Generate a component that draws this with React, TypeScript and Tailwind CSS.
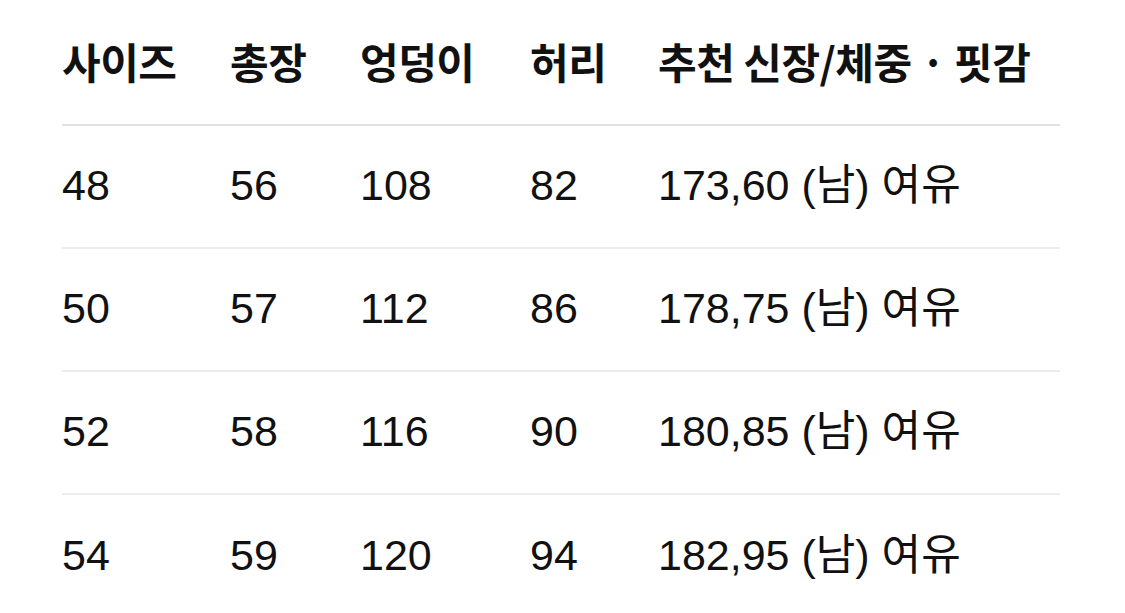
const headers = ["사이즈", "총장", "엉덩이", "허리", "추천 신장/체중 · 핏감"];

const rows = [
  ["48", "56", "108", "82", "173,60 (남) 여유"],
  ["50", "57", "112", "86", "178,75 (남) 여유"],
  ["52", "58", "116", "90", "180,85 (남) 여유"],
  ["54", "59", "120", "94", "182,95 (남) 여유"],
];

const cols = "grid grid-cols-[168px_130px_170px_128px_1fr] items-center";

export default function App() {
  return (
    <div className="w-[1125px] h-[613px] overflow-hidden bg-white text-[#111] font-['Liberation_Sans','Noto_Sans_CJK_KR',sans-serif]">
      <div className="ml-[62px] w-[998px]">
        <div className={`${cols} h-[126px] border-b-2 border-[#e2e2e2] pb-[4px] text-[42px] font-bold font-['Noto_Sans_CJK_KR',sans-serif] tracking-[-0.5px]`}>
          {headers.map((h) => (
            <div key={h}>{h}</div>
          ))}
        </div>
        {rows.map((r, i) => (
          <div
            key={r[0]}
            className={`${cols} h-[123px] text-[43px] pb-[2px] ${i < rows.length - 1 ? "border-b-2 border-[#ececec]" : ""}`}
          >
            {r.map((c, j) => (
              <div key={j}>{c}</div>
            ))}
          </div>
        ))}
      </div>
    </div>
  );
}
